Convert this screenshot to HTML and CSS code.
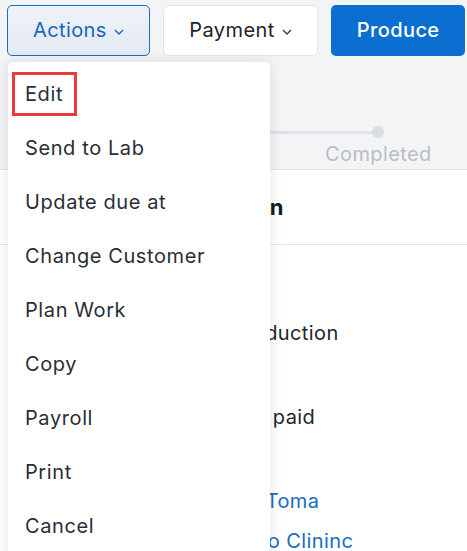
FILE: index.html
```html
<!DOCTYPE html>
<html>
<head>
<meta charset="utf-8">
<link rel="stylesheet" href="styles.css">
</head>
<body>
<div class="page">
  <div class="toolbar">
    <button class="btn btn-actions">Actions <svg class="chev" viewBox="0 0 10 6"><path d="M1 1l4 4 4-4"/></svg></button>
    <button class="btn btn-payment">Payment <svg class="chev" viewBox="0 0 10 6"><path d="M1 1l4 4 4-4"/></svg></button>
    <button class="btn btn-produce">Produce</button>
  </div>
  <div class="progress">
    <div class="track">
      <div class="line"></div>
      <div class="dot"></div>
    </div>
    <div class="step-label">Completed</div>
  </div>
  <div class="card">
    <div class="card-head">
      <div class="clip"><div class="shift"><span class="title">Case Information</span></div></div>
    </div>
    <div class="rows">
      <div class="row"><div class="clip"><div class="shift"><span class="value">Production</span></div></div></div>
      <div class="row"><div class="clip"><div class="shift"><span class="value">Not paid</span></div></div></div>
      <div class="row link"><div class="clip"><div class="shift"><span class="value">Dr. Toma</span></div></div></div>
      <div class="row link"><div class="clip"><div class="shift"><span class="value clinic">Demo Clininc</span></div></div></div>
    </div>
  </div>

  <div class="menu">
    <div class="item"><span class="edit-box">Edit</span></div>
    <div class="item">Send to Lab</div>
    <div class="item">Update due at</div>
    <div class="item">Change Customer</div>
    <div class="item">Plan Work</div>
    <div class="item">Copy</div>
    <div class="item">Payroll</div>
    <div class="item">Print</div>
    <div class="item">Cancel</div>
  </div>
</div>
</body>
</html>
```
FILE: styles.css
```css
* { box-sizing: border-box; }
html, body { margin: 0; padding: 0; }
body {
  font-family: Inter, "Noto Sans", sans-serif;
  background: #f3f4f6;
  width: 467px;
  height: 551px;
  overflow: hidden;
}
.page { position: relative; height: 551px; overflow: hidden; }
.toolbar {
  display: flex;
  gap: 13px;
  padding: 5px 2px 0 7px;
  height: 62px;
}
.btn {
  height: 51px;
  border-radius: 5px;
  font-family: inherit;
  font-size: 20px;
  letter-spacing: 0.4px;
  display: flex;
  align-items: center;
  justify-content: center;
  gap: 7px;
  padding-bottom: 3px;
  cursor: pointer;
}
.chev { width: 10px; height: 6px; fill: none; stroke-width: 1.3; margin-top: 4px; }
.btn-actions {
  width: 143px;
  border: 1px solid #1b6cc0;
  background: linear-gradient(180deg, #eef2f8, #e4eaf2);
  color: #1866bd;
}
.btn-actions .chev { stroke: #1866bd; }
.btn-payment {
  width: 156px;
  border: 1px solid #e3e5e9;
  background: #fff;
  color: #1f2329;
}
.btn-payment .chev { stroke: #333; }
.btn-produce {
  width: 134px;
  border: none;
  background: #0a6fd0;
  color: #fff;
  font-weight: 500;
}
.progress {
  height: 107px;
}
.track {
  display: flex;
  align-items: center;
  padding-top: 64px;
  padding-left: 240px;
}
.line { width: 138px; height: 3px; background: #dfe2e6; }
.dot { width: 12px; height: 12px; border-radius: 50%; background: #dadde2; margin-left: -6px; }
.step-label {
  margin-left: 325px;
  margin-top: 4px;
  font-size: 20px;
  letter-spacing: 0.4px;
  color: #b9bdc4;
}
.card {
  background: #fff;
  border-top: 1px solid #e6e7ea;
  height: 400px;
}
.card-head {
  height: 75px;
  border-bottom: 1px solid #e6e7ea;
  display: flex;
  align-items: center;
}
.clip {
  margin-left: 270px;
  overflow: hidden;
  flex: 1;
}
.shift {
  margin-left: -270px;
  white-space: nowrap;
}
.title { font-size: 22px; font-weight: 700; color: #161b22; padding-left: 99px; }
.rows { padding-top: 76px; }
.row {
  display: flex;
  font-size: 20px;
  letter-spacing: 0.4px;
  color: #22262c;
  height: 84px;
}
.row.link { color: #1a6cc2; height: 40px; }
.value { padding-left: 232px; }
.value.clinic { padding-left: 223px; }
.menu {
  position: absolute;
  left: 8px;
  top: 62px;
  width: 262px;
  height: 520px;
  background: #fff;
  border-radius: 5px;
  box-shadow: 0 0 14px rgba(0,0,0,0.10);
  padding-top: 5px;
}
.item {
  height: 54px;
  display: flex;
  align-items: center;
  padding-left: 17px;
  font-size: 20px;
  letter-spacing: 0.6px;
  color: #2a2e35;
}
.edit-box {
  border: 3px solid #ea3a3a;
  padding: 7px 11px 7px 10px;
  margin-left: -13px;
}
```
